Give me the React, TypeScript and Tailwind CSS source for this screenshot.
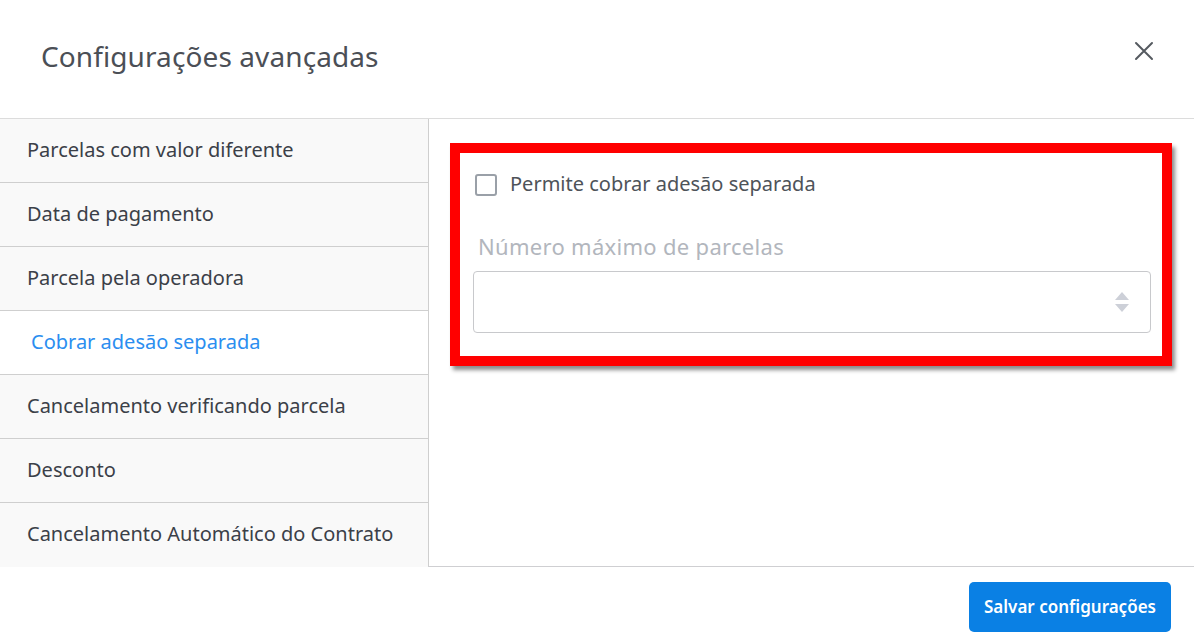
import React from "react";

const items = [
  "Parcelas com valor diferente",
  "Data de pagamento",
  "Parcela pela operadora",
  "Cobrar adesão separada",
  "Cancelamento verificando parcela",
  "Desconto",
  "Cancelamento Automático do Contrato",
];

export default function App() {
  return (
    <div
      className="w-[1194px] h-[643px] bg-white flex flex-col overflow-hidden"
      style={{ fontFamily: '"Noto Sans", "Open Sans", sans-serif' }}
    >
      <div className="h-[119px] shrink-0 border-b border-[#dcdcdc] flex items-center justify-between pl-[41px] pr-[40px]">
        <h1 className="text-[28px] text-[#4b4f56] tracking-[0.1px] mt-[-7px]">Configurações avançadas</h1>
        <svg width="20" height="20" viewBox="0 0 20 20" className="mt-[-16px]">
          <path d="M2 2 L18 18 M18 2 L2 18" stroke="#555a60" strokeWidth="2" strokeLinecap="round" />
        </svg>
      </div>
      <div className="flex h-[448px] shrink-0 border-b border-[#cfcfd2]">
        <div className="w-[429px] shrink-0 border-r border-[#cfcfcf] flex flex-col">
          {items.map((t, i) => {
            const active = i === 3;
            return (
              <div
                key={t}
                className={`h-[64px] shrink-0 flex items-center ${i < items.length - 1 ? "border-b border-[#cfcfcf]" : ""} ${
                  active ? "bg-white pl-[31px] text-[#2b8ef0]" : "bg-[#f9f9f9] pl-[27px] text-[#3b4048]"
                } text-[20px] pb-[2px]`}
              >
                {t}
              </div>
            );
          })}
        </div>
        <div className="flex-1 pl-[21px] pr-[22px] pt-[24px]">
          <div className="border-[10px] border-[#ff0000] shadow-[3px_4px_4px_rgba(0,0,0,0.45)] h-[223px] pl-[13px] pr-[11px] pt-[18px]">
            <label className="flex items-center gap-[13px]">
              <span className="w-[22px] h-[22px] border-2 border-[#9aa0a8] rounded-[3px] bg-white ml-[2px]" />
              <span className="text-[20px] text-[#4e5359] mt-[-2px]">Permite cobrar adesão separada</span>
            </label>
            <div className="mt-[32px] ml-[5px] text-[22px] tracking-[0.3px] leading-[30px] text-[#b2b6bd]">Número máximo de parcelas</div>
            <div className="mt-[10px] h-[62px] border border-[#c8c9cc] rounded-[4px] flex items-center justify-end pr-[20px]">
              <svg width="16" height="22" viewBox="0 0 16 22">
                <path d="M8 1 L15 9 H1 Z" fill="#cdd0d8" />
                <path d="M1 13 H15 L8 21 Z" fill="#cdd0d8" />
              </svg>
            </div>
          </div>
        </div>
      </div>
      <div className="flex-1 flex justify-end items-start pt-[15px] pr-[23px]">
        <button className="h-[50px] w-[202px] rounded-[5px] bg-[#0a80e4] text-white text-[17px] font-semibold">
          Salvar configurações
        </button>
      </div>
    </div>
  );
}
